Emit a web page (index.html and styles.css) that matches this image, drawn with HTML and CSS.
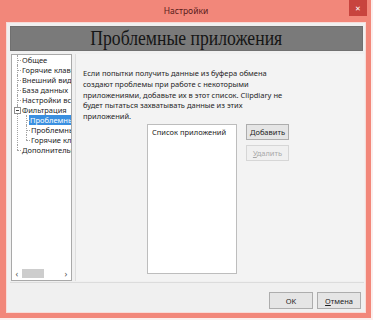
FILE: index.html
```html
<!DOCTYPE html>
<html lang="ru">
<head>
<meta charset="utf-8">
<title>Настройки</title>
<link rel="stylesheet" href="styles.css">
</head>
<body>
<div class="window">
  <div class="titlebar">
    <span></span>
    <span class="title">Настройки</span>
    <span class="close">&#x2715;</span>
  </div>
  <div class="client">
    <div class="banner"><span class="banner-text">Проблемные приложения</span></div>
    <div class="main">
      <div class="tree">
        <ul class="root">
          <li>Общее</li>
          <li>Горячие клавиши</li>
          <li>Внешний вид</li>
          <li>База данных</li>
          <li>Настройки вставки</li>
          <li class="open"><span class="toggle"></span>Фильтрация
            <ul class="sub">
              <li><span class="sel">Проблемные приложения</span></li>
              <li>Проблемные форматы</li>
              <li>Горячие клавиши</li>
            </ul>
          </li>
          <li>Дополнительно</li>
        </ul>
        <div class="hscroll">
          <span class="arr">&lsaquo;</span>
          <span class="track"><span class="thumb"></span></span>
          <span class="arr">&rsaquo;</span>
        </div>
      </div>
      <div class="panel">
        <p class="desc">Если попытки получить данные из буфера обмена<br>создают проблемы при работе с некоторыми<br>приложениями, добавьте их в этот список. Clipdiary не<br>будет пытаться захватывать данные из этих<br>приложений.</p>
        <div class="apps">
          <div class="list">Список приложений</div>
          <div class="btns">
            <button class="btn">Добавить</button>
            <button class="btn disabled"><u>У</u>далить</button>
          </div>
        </div>
      </div>
    </div>
    <div class="footer">
      <button class="btn big">OK</button>
      <button class="btn big"><u>О</u>тмена</button>
    </div>
  </div>
</div>
</body>
</html>
```

FILE: styles.css
```css
* { box-sizing: border-box; }
html, body {
  margin: 0;
  padding: 0;
}
body {
  width: 373px;
  height: 320px;
  overflow: hidden;
  background: #fcefed;
  font-family: "Noto Sans", "Open Sans", sans-serif;
  font-size: 7.5px;
  color: #1e1e1e;
}
.window {
  width: 371px;
  height: 318px;
  background: #f2877a;
  padding: 0 5px 5px 6px;
  display: flex;
  flex-direction: column;
}
.titlebar {
  height: 22px;
  display: grid;
  grid-template-columns: 1fr auto 1fr;
  align-items: center;
}
.title {
  font-size: 8.5px;
  color: #5a1c1a;
  margin-top: -1px;
}
.close {
  justify-self: end;
  align-self: start;
  width: 18px;
  height: 16px;
  margin-right: -1px;
  background: #c8443e;
  color: #fff;
  font-size: 7px;
  display: flex;
  align-items: center;
  justify-content: center;
}
.client {
  flex: 1;
  background: #f0f0f0;
  border: 1px solid #f8dcd8;
  display: flex;
  flex-direction: column;
  padding: 3px 1px 0 3px;
}
.banner {
  height: 25px;
  background: #7a7a7a;
  border: 1px solid #707070;
  color: #151515;
  font-family: "Liberation Serif", serif;
  font-size: 21px;
  line-height: 23px;
  text-align: center;
  margin-right: 1px;
  overflow: hidden;
}
.banner-text {
  display: inline-block;
  transform: scaleX(0.84);
}
.main {
  display: flex;
  height: 227px;
  margin-top: 3px;
}
.tree {
  width: 61px;
  margin-left: 1px;
  background: #fff;
  border: 1px solid #a9a9a9;
  display: flex;
  flex-direction: column;
  overflow: hidden;
}
.tree ul {
  list-style: none;
  margin: 0;
  padding: 0;
}
.root {
  flex: 1;
}
.tree li {
  position: relative;
  padding-left: 10px;
  line-height: 10px;
  white-space: nowrap;
}
.tree li::before {
  content: "";
  position: absolute;
  left: 5px;
  top: 5px;
  width: 4px;
  border-top: 1px dotted #a4a4a4;
}
.tree li::after {
  content: "";
  position: absolute;
  left: 5px;
  top: 0;
  bottom: 0;
  border-left: 1px dotted #a4a4a4;
}
.tree li:last-child::after {
  bottom: auto;
  height: 5px;
}
.sub {
  margin-left: -1px !important;
}
.sub li {
  padding-left: 10px;
}
.toggle {
  position: absolute;
  left: 2px;
  top: 2px;
  width: 7px;
  height: 7px;
  border: 1px solid #8f8f8f;
  background: #fff;
  z-index: 1;
}
.toggle::after {
  content: "";
  position: absolute;
  left: 1px;
  top: 2px;
  width: 3px;
  border-top: 1px solid #444;
}
.sel {
  display: inline-block;
  background: #3a8fe0;
  color: #fff;
  padding: 0 1px;
  margin-left: -2px;
  width: 60px;
}
.hscroll {
  height: 11px;
  display: flex;
  align-items: center;
  background: #fff;
  margin-bottom: 1px;
}
.arr {
  width: 10px;
  text-align: center;
  font-size: 9px;
  color: #555;
  line-height: 11px;
}
.track {
  flex: 1;
  height: 9px;
  display: flex;
}
.thumb {
  width: 22px;
  background: #cdcdcd;
}
.panel {
  flex: 1;
  margin-left: 3px;
  background: #f3f3f3;
  border-left: 1px solid #dedede;
  padding: 14px 6px 0 7px;
  display: flex;
  flex-direction: column;
}
.desc {
  margin: 0;
  line-height: 10.8px;
  color: #262626;
}
.apps {
  display: flex;
  margin-top: 2px;
  margin-left: 64px;
}
.list {
  width: 90px;
  height: 150px;
  background: #fff;
  border: 1px solid #bdbdbd;
  padding: 2px 4px;
  line-height: 10px;
}
.btns {
  display: flex;
  flex-direction: column;
  gap: 5px;
  margin-left: 9px;
}
.btn {
  font-family: inherit;
  font-size: 7.5px;
  color: #1e1e1e;
  width: 43px;
  height: 16px;
  padding: 0;
  background: #e5e5e5;
  border: 1px solid #adadad;
  border-radius: 0;
}
.btn u { text-decoration: underline; }
.btn.disabled {
  color: #a8a8a8;
  background: #f0f0f0;
  border-color: #d6d6d6;
}
.footer {
  flex: 1;
  margin-top: 1px;
  border-top: 1px solid #dcdcdc;
  display: flex;
  justify-content: flex-end;
  align-items: flex-start;
  gap: 4px;
  padding: 9px 3px 0 0;
}
.btn.big {
  width: 44px;
  height: 17px;
}
```
